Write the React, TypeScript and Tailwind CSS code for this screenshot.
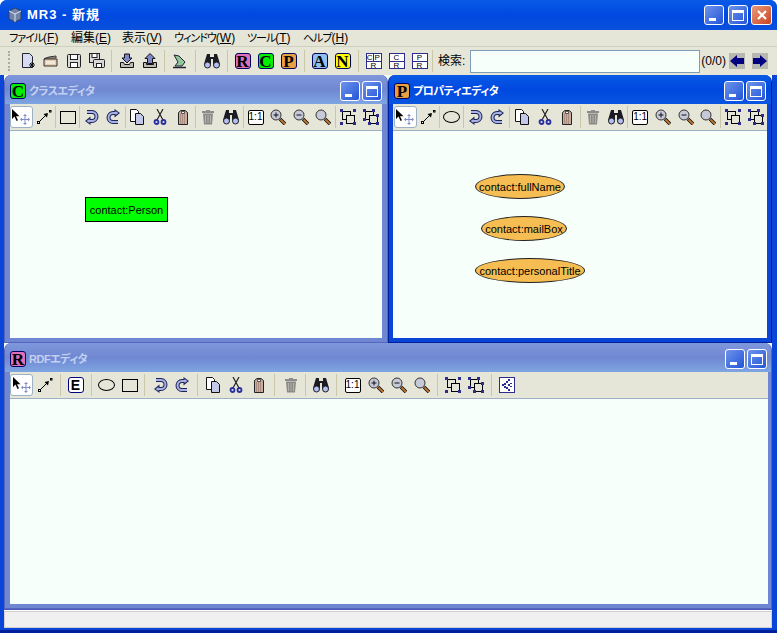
import type { ReactNode } from "react"

const jp = "font-['Liberation_Sans','Noto_Sans_CJK_JP',sans-serif] [font-feature-settings:'palt']"

function Svg({ children, className = "w-4 h-4" }: { children: ReactNode; className?: string }) {
  return (
    <svg viewBox="0 0 16 16" className={className}>
      {children}
    </svg>
  )
}

const SelectIcon = () => (
  <svg viewBox="0 0 20 16" className="h-4 w-5">
    <path d="M1 0v10l2.500-2.500L5.500 12l1.500-.8-2-4h3.500z" fill="#000" />
    <path d="M14 7v7M10.500 10.500h7" stroke="#7f8cc8" strokeWidth="1" />
    <path d="M14 5l-2 2h4zM14 16l-2-2h4zM9 10.500l2-2v4zM19 10.500l-2-2v4z" fill="#7f8cc8" />
  </svg>
)
const ConnectIcon = () => (
  <Svg>
    <path d="M3 13L11 5" stroke="#000" strokeWidth="1" />
    <path d="M12 4l-4.500 1 3.500 3.500z" fill="#000" />
    <rect x="1.500" y="12.500" width="2" height="2" fill="#fff" stroke="#000" />
    <rect x="13.500" y="1.500" width="1.500" height="1.500" fill="#fff" stroke="#000" />
  </Svg>
)
const RectIcon = () => <div className="h-[13px] w-[16px] border border-black" />
const EllipseIcon = () => <div className="h-[12px] w-[17px] rounded-[50%] border border-black" />
const UndoIcon = ({ redo = false }: { redo?: boolean }) => (
  <Svg className={redo ? "h-4 w-4 rotate-180" : "h-4 w-4"}>
    <path d="M4 3h5a4 4 0 0 1 0 9H6" fill="none" stroke="#1c2458" strokeWidth="4" />
    <path d="M7.500 7.500L2 12l5.500 4z" fill="#1c2458" />
    <path d="M4 3h5a4 4 0 0 1 0 9H6" fill="none" stroke="#aab2e2" strokeWidth="2" />
    <path d="M6.500 10L3.500 12l3 2z" fill="#aab2e2" />
  </Svg>
)
const NewIcon = () => (
  <Svg>
    <path d="M2.500.5h7l3 3v11h-10z" fill="#d8dcf2" stroke="#223" />
    <path d="M12 9v6M9 12h6M10 10l4 4M14 10l-4 4" stroke="#111" strokeWidth="1" />
  </Svg>
)
const OpenIcon = () => (
  <Svg>
    <path d="M1 6l5-2 7-1v2H3zM1 6h13v7H1z" fill="#e6cdb4" stroke="#333" />
    <path d="M3 8h9v3H3z" fill="#f3e7d7" />
  </Svg>
)
const SaveIcon = () => (
  <Svg>
    <rect x="1.500" y="1.500" width="13" height="13" rx="1" fill="#d9d9d9" stroke="#222" />
    <rect x="4.500" y="1.500" width="7" height="5" fill="#fff" stroke="#222" />
    <rect x="4.500" y="9.500" width="7" height="5" fill="#fff" stroke="#222" />
  </Svg>
)
const SaveAsIcon = () => (
  <Svg>
    <rect x=".5" y=".5" width="10" height="9" fill="#d9d9d9" stroke="#222" />
    <rect x="3" y=".5" width="5" height="4" fill="#fff" stroke="#222" />
    <rect x="4.500" y="6.500" width="11" height="8" rx="1" fill="#d9d9d9" stroke="#222" />
    <rect x="7.500" y="10.500" width="5" height="4" fill="#fff" stroke="#222" />
  </Svg>
)
const ImportIcon = () => (
  <Svg>
    <path d="M5.500 1h5v4H13l-5 5-5-5h2.500z" fill="#7f88c8" stroke="#111" />
    <path d="M1.500 9.500h3l1 2h5l1-2h3v5h-13z" fill="#bcbcb4" stroke="#111" />
  </Svg>
)
const ExportIcon = () => (
  <Svg>
    <path d="M8 .5l5 5h-2.500v5h-5v-5H3z" fill="#7f88c8" stroke="#111" />
    <path d="M1.500 9.500h3v2h7v-2h3v5h-13z" fill="#bcbcb4" stroke="#111" />
  </Svg>
)
const AttrIcon = () => (
  <Svg>
    <path d="M3 2l5 1 6 6-3 4H4l3-4z" fill="#8fc79d" stroke="#223" />
    <path d="M2 14.500h13" stroke="#223" strokeWidth="1.400" />
  </Svg>
)
const BinocularsIcon = () => (
  <Svg>
    <path d="M3 1h3v3h4V1h3l3 10H9V6H7v5H0z" fill="#1b1b22" />
    <circle cx="3.500" cy="12" r="3" fill="#b6c0f0" stroke="#1b1b22" />
    <circle cx="12.500" cy="12" r="3" fill="#b6c0f0" stroke="#1b1b22" />
  </Svg>
)
const CopyIcon = () => (
  <Svg>
    <path d="M1.500 .5h6l2 2v10h-8z" fill="#fff" stroke="#111" />
    <path d="M6.500 4.500h5l3 3v8h-8z" fill="#c3c7e8" stroke="#111" />
  </Svg>
)
const CutIcon = () => (
  <Svg>
    <path d="M5 0l6 11M11 0L5 11" stroke="#222" strokeWidth="1.200" />
    <circle cx="4.500" cy="13" r="2" fill="#d8dcf4" stroke="#28309a" strokeWidth="1.800" />
    <circle cx="11.500" cy="13" r="2" fill="#d8dcf4" stroke="#28309a" strokeWidth="1.800" />
  </Svg>
)
const PasteIcon = () => (
  <Svg>
    <path d="M3.500 3.500L6 1.500h4l2.500 2v12h-9z" fill="#c9aea2" stroke="#222" />
    <path d="M6.500 2.500h3v2h-3z" fill="#f6f6f0" stroke="#222" strokeWidth=".7" />
    <path d="M5 6h6M5 8h6M5 10h6M5 12h6M5 14h6" stroke="#8d6b60" strokeDasharray="1 1" />
  </Svg>
)
const TrashIcon = () => (
  <Svg>
    <path d="M2 2h12v2H2zM6 1h4v1H6z" fill="#8c8c8c" />
    <path d="M3 4.500h10l-1 11H4z" fill="#8a8a86" />
    <path d="M5.500 6v8M8 6v8M10.500 6v8" stroke="#b3b3ac" />
  </Svg>
)
const OneIcon = () => (
  <div className="flex h-[15px] w-[16px] items-center justify-center rounded-[2px] border border-black bg-white text-[10px] leading-none text-black">
    1:1
  </div>
)
const ZoomIcon = ({ mark = "" }: { mark?: "" | "+" | "-" }) => (
  <Svg>
    <path d="M10 10l5 5" stroke="#111" strokeWidth="3.500" />
    <path d="M10.500 10.500l4.500 4.500" stroke="#c07830" strokeWidth="1.800" />
    <circle cx="6" cy="6" r="5" fill="#c6c9d8" stroke="#333" />
    {mark && <path d="M3.500 6h5" stroke="#111" />}
    {mark === "+" && <path d="M6 3.500v5" stroke="#111" />}
  </Svg>
)
const Handles = ({ pts }: { pts: number[][] }) => (
  <>
    {pts.map(([x, y]) => (
      <rect key={`${x}-${y}`} x={x} y={y} width="3" height="3" fill="#2c2c8c" />
    ))}
  </>
)
const GroupIcon = () => (
  <Svg>
    <rect x="2.500" y="2.500" width="8" height="8" fill="none" stroke="#000" />
    <rect x="6.500" y="6.500" width="8" height="8" fill="#e6e6d8" stroke="#000" />
    <Handles pts={[[0, 0], [13, 0], [0, 13], [13, 13]]} />
  </Svg>
)
const UngroupIcon = () => (
  <Svg>
    <rect x="2.500" y="2.500" width="8" height="8" fill="none" stroke="#000" />
    <rect x="6.500" y="6.500" width="8" height="8" fill="#e6e6d8" stroke="#000" />
    <Handles pts={[[0, 0], [9, 0], [0, 9], [13, 5], [5, 13], [13, 13]]} />
  </Svg>
)
const TreeIcon = () => (
  <div className="flex h-[16px] w-[16px] items-center justify-center border border-[#2c2c8c] bg-white">
    <svg viewBox="0 0 14 14" className="h-[14px] w-[14px]">
      <path d="M8 1h2v2H8zM6 3h2v2H6zM4 5h2v2H4zM2 6h2v2H2zM4 8h2v2H4zM6 9h2v2H6zM8 11h2v2H8zM10 5h2v1h-2zM10 8h2v1h-2zM8 6h2v2H8z" fill="#2c2c8c" />
    </svg>
  </div>
)
const EIcon = () => (
  <div className="flex h-[16px] w-[16px] items-center justify-center rounded-[3px] border border-[#000080] bg-white font-['Liberation_Sans',sans-serif] text-[14px] leading-none font-bold text-black">
    E
  </div>
)

function LetterIcon({ letter, color }: { letter: string; color: string }) {
  return (
    <div className={`flex h-[16px] w-[16px] shrink-0 items-center justify-center rounded-[3px] border border-[#000060] font-['Liberation_Serif',serif] text-[17px] leading-none font-bold text-black ${color}`}>
      {letter}
    </div>
  )
}

function LayerIcon({ top, bottom }: { top: string[]; bottom: string }) {
  return (
    <div className="flex h-[16px] w-[16px] flex-col border border-[#2c2c8c] bg-white font-['Liberation_Sans',sans-serif] text-[8px] leading-[7px] text-black">
      <div className="flex flex-1 justify-center border-b border-[#2c2c8c]">
        {top.map((t, i) => (
          <span key={t} className={i > 0 ? "flex-1 border-l border-[#2c2c8c] text-center" : "flex-1 text-center"}>
            {t}
          </span>
        ))}
      </div>
      <div className="flex-1 text-center">{bottom}</div>
    </div>
  )
}

const Btn = ({ children, active = false }: { children: ReactNode; active?: boolean }) => (
  <div className={active ? "flex h-[22px] w-[23px] items-center justify-center rounded-[3px] border border-[#9db0c4] bg-white" : "flex h-[22px] w-[23px] items-center justify-center"}>
    {children}
  </div>
)

const Sep = ({ w = "w-px" }: { w?: string }) => (
  <div className={`flex h-[22px] justify-center ${w}`}>
    <div className="h-full w-px shrink-0 bg-[#c9c7a8]" />
  </div>
)

const BigBtn = ({ children }: { children: ReactNode }) => (
  <div className="flex h-[22px] w-[23px] items-center justify-center">{children}</div>
)

function Toolbar({ shape, inset = "" }: { shape: ReactNode; inset?: string }) {
  return (
    <div className={`flex h-[26px] shrink-0 items-center bg-[#e6e6d8] ${inset}`}>
      <Btn active><SelectIcon /></Btn>
      <Btn><ConnectIcon /></Btn>
      <Sep />
      <Btn>{shape}</Btn>
      <Sep />
      <Btn><UndoIcon /></Btn>
      <Btn><UndoIcon redo /></Btn>
      <Sep />
      <Btn><CopyIcon /></Btn>
      <Btn><CutIcon /></Btn>
      <Btn><PasteIcon /></Btn>
      <Sep w="w-[3px]" />
      <Btn><TrashIcon /></Btn>
      <Btn><BinocularsIcon /></Btn>
      <Sep w="w-[2px]" />
      <Btn><OneIcon /></Btn>
      <Btn><ZoomIcon mark="+" /></Btn>
      <Btn><ZoomIcon mark="-" /></Btn>
      <Btn><ZoomIcon /></Btn>
      <Sep w="w-[2px]" />
      <Btn><GroupIcon /></Btn>
      <Btn><UngroupIcon /></Btn>
    </div>
  )
}

function RdfToolbar() {
  const s = "w-[8px]"
  return (
    <div className="flex h-[26px] shrink-0 items-center bg-[#e6e6d8]">
      <Btn active><SelectIcon /></Btn>
      <Btn><ConnectIcon /></Btn>
      <Sep w={s} />
      <Btn><EIcon /></Btn>
      <Sep w={s} />
      <Btn><EllipseIcon /></Btn>
      <Btn><RectIcon /></Btn>
      <Sep w="w-[7px]" />
      <Btn><UndoIcon /></Btn>
      <Btn><UndoIcon redo /></Btn>
      <Sep w="w-[7px]" />
      <Btn><CopyIcon /></Btn>
      <Btn><CutIcon /></Btn>
      <Btn><PasteIcon /></Btn>
      <Sep w="w-[9px]" />
      <Btn><TrashIcon /></Btn>
      <Sep w="w-[7px]" />
      <Btn><BinocularsIcon /></Btn>
      <Sep w="w-[9px]" />
      <Btn><OneIcon /></Btn>
      <Btn><ZoomIcon mark="+" /></Btn>
      <Btn><ZoomIcon mark="-" /></Btn>
      <Btn><ZoomIcon /></Btn>
      <Sep w={s} />
      <Btn><GroupIcon /></Btn>
      <Btn><UngroupIcon /></Btn>
      <Sep w={s} />
      <Btn><TreeIcon /></Btn>
    </div>
  )
}

const CapBtn = ({ kind }: { kind: "min" | "max" | "close" }) => (
  <div className={kind === "close"
    ? "flex h-[20px] w-[21px] items-center justify-center rounded-[3px] border border-white bg-gradient-to-br from-[#e89a7a] to-[#c8401c]"
    : "flex h-[20px] w-[20px] items-center justify-center rounded-[3px] border border-white bg-gradient-to-br from-[#6f93ea] to-[#2353d8]"}>
    {kind === "min" && <div className="mt-[9px] mr-[3px] h-[3px] w-[7px] bg-white" />}
    {kind === "max" && <div className="h-[11px] w-[12px] border border-t-[3px] border-white" />}
    {kind === "close" && (
      <svg viewBox="0 0 12 12" className="h-3 w-3">
        <path d="M2 2l8 8M10 2l-8 8" stroke="#fff" strokeWidth="2.200" />
      </svg>
    )}
  </div>
)

function Frame({ title, icon, active = false, toolbar, children, className, titlePad, bodyPad }: {
  title: string
  icon: ReactNode
  active?: boolean
  toolbar: ReactNode
  children?: ReactNode
  className: string
  titlePad: string
  bodyPad: string
}) {
  return (
    <div className={`${className} flex flex-col rounded-t-[7px] border-x border-b ${active ? "border-[#00209a] bg-[#0a45d8]" : "border-[#5566bc] bg-[#6f86d2]"}`}>
      <div className={active
        ? `flex h-[29px] shrink-0 items-center gap-[3px] rounded-t-[7px] bg-gradient-to-b from-[#0a5ae6] via-[#0048e0] to-[#0a55e0] pt-[3px] ${titlePad}`
        : `flex h-[29px] shrink-0 items-center gap-[3px] rounded-t-[7px] bg-gradient-to-b from-[#7f97dc] via-[#6f88d2] to-[#7fa5e2] pt-[3px] ${titlePad}`}>
        {icon}
        <span className={`${jp} flex-1 text-[11px] font-bold tracking-[-0.5px] ${active ? "text-white" : "text-[#c3d1f1]"}`}>{title}</span>
        <div className="flex gap-[2px]">
          <CapBtn kind="min" />
          <CapBtn kind="max" />
        </div>
      </div>
      <div className={`flex min-h-0 flex-1 flex-col pb-[4px] ${bodyPad}`}>
        {toolbar}
        <div className="relative min-h-0 flex-1 border-t border-[#9db0c4] bg-[#f6fffa]">{children}</div>
      </div>
    </div>
  )
}

const Oval = ({ text, pos }: { text: string; pos: string }) => (
  <div className={`absolute flex h-[25px] items-center justify-center rounded-[50%] border border-[#222] bg-[#f6bd52] pt-px font-['Liberation_Sans',sans-serif] text-[11px] text-black ${pos}`}>
    {text}
  </div>
)

const menus = [
  { name: "ファイル", key: "F", w: "w-[62px]", kana: true },
  { name: "編集", key: "E", w: "w-[51px]", kana: false },
  { name: "表示", key: "V", w: "w-[52px]", kana: false },
  { name: "ウィンドウ", key: "W", w: "w-[73px]", kana: true },
  { name: "ツール", key: "T", w: "w-[56px]", kana: true },
  { name: "ヘルプ", key: "H", w: "w-[44px]", kana: true },
]

export default function App() {
  return (
    <div className={`${jp} flex h-[633px] w-[777px] flex-col overflow-hidden rounded-t-[7px] bg-[#0a45d8] text-black`}>
      <div className="flex h-[30px] shrink-0 items-center bg-gradient-to-b from-[#0a5ae6] via-[#0048e0] to-[#0a50dc] pr-[5px] pl-[7px]">
        <svg viewBox="0 0 16 16" className="h-4 w-4">
          <path d="M2 4l6-3 6 3v8l-6 3-6-3z" fill="#6f83a8" stroke="#33405f" />
          <path d="M2 4l6 3 6-3M8 7v8" stroke="#d9e2f2" fill="none" />
        </svg>
        <span className="ml-[4px] flex-1 text-[13px] font-bold tracking-[1px] text-white">MR3 - 新規</span>
        <div className="flex items-center">
          <CapBtn kind="min" />
          <div className="w-[4px]" />
          <CapBtn kind="max" />
          <div className="w-[3px]" />
          <CapBtn kind="close" />
        </div>
      </div>

      <div className="flex h-[16px] shrink-0 items-center bg-[#e6e6d8] pl-[9px] text-[12px] leading-none">
        {menus.map((m) => (
          <span key={m.key} className={`${m.w} whitespace-nowrap`}>
            <span className={m.kana ? "text-[11px] tracking-[-1px]" : ""}>{m.name}</span>
            (<span className="underline">{m.key}</span>)
          </span>
        ))}
      </div>

      <div className="flex h-[29px] shrink-0 items-center border-t border-[#cfcfbd] bg-[#e6e6d8] pl-[8px]">
        <div className="mr-[6px] h-[20px] w-[2px] border-l-2 border-dotted border-[#aaa]" />
        <BigBtn><NewIcon /></BigBtn>
        <BigBtn><OpenIcon /></BigBtn>
        <BigBtn><SaveIcon /></BigBtn>
        <BigBtn><SaveAsIcon /></BigBtn>
        <Sep w="w-[7px]" />
        <BigBtn><ImportIcon /></BigBtn>
        <BigBtn><ExportIcon /></BigBtn>
        <Sep w="w-[6px]" />
        <BigBtn><AttrIcon /></BigBtn>
        <Sep w="w-[10px]" />
        <BigBtn><BinocularsIcon /></BigBtn>
        <Sep w="w-[8px]" />
        <BigBtn><LetterIcon letter="R" color="bg-[#e070b8]" /></BigBtn>
        <BigBtn><LetterIcon letter="C" color="bg-[#00f000]" /></BigBtn>
        <BigBtn><LetterIcon letter="P" color="bg-[#e8a040]" /></BigBtn>
        <Sep w="w-[8px]" />
        <BigBtn><LetterIcon letter="A" color="bg-[#90c0f0]" /></BigBtn>
        <BigBtn><LetterIcon letter="N" color="bg-[#ffff00]" /></BigBtn>
        <Sep w="w-[8px]" />
        <BigBtn><LayerIcon top={["C", "P"]} bottom="R" /></BigBtn>
        <BigBtn><LayerIcon top={["C"]} bottom="R" /></BigBtn>
        <BigBtn><LayerIcon top={["P"]} bottom="R" /></BigBtn>
        <Sep w="w-[3px]" />
        <span className="ml-[4px] text-[12px]">検索:</span>
        <div className="ml-[5px] h-[23px] w-[230px] border border-[#7f9db9] bg-[#f6fffa]" />
        <span className="ml-px w-[26px] font-['Liberation_Sans',sans-serif] text-[12px] leading-none">(0/0)</span>
        <div className="ml-[2px] flex gap-[7px]">
          <svg viewBox="0 0 16 16" className="h-4 w-4 bg-[#b8b8b0]">
            <path d="M1 8l7-6v3h7v6H8v3z" fill="#000080" />
          </svg>
          <svg viewBox="0 0 16 16" className="h-4 w-4 bg-[#b8b8b0]">
            <path d="M15 8L8 2v3H1v6h7v3z" fill="#000080" />
          </svg>
        </div>
      </div>

      <div className="mr-[5px] ml-[4px] flex min-h-0 flex-1 flex-col bg-[#f6fffa]">
        <div className="flex h-[268px] shrink-0">
          <Frame
            className="w-[384px]"
            title="クラスエディタ"
            icon={<LetterIcon letter="C" color="bg-[#00f000]" />}
            titlePad="px-[5px]"
            bodyPad="px-[5px]"
            toolbar={<Toolbar shape={<RectIcon />} />}
          >
            <div className="absolute top-[66px] left-[75px] flex h-[25px] w-[83px] items-center justify-center border border-black bg-[#00ff00] pt-px font-['Liberation_Sans',sans-serif] text-[11px]">
              contact:Person
            </div>
          </Frame>
          <Frame
            active
            className="w-[384px]"
            title="プロパティエディタ"
            icon={<LetterIcon letter="P" color="bg-[#e8a040]" />}
            titlePad="px-[5px]"
            bodyPad="px-[4px]"
            toolbar={<Toolbar shape={<EllipseIcon />} inset="pl-px" />}
          >
            <Oval text="contact:fullName" pos="top-[43px] left-[82px] w-[90px]" />
            <Oval text="contact:mailBox" pos="top-[85px] left-[88px] w-[86px]" />
            <Oval text="contact:personalTitle" pos="top-[127px] left-[82px] w-[110px]" />
          </Frame>
        </div>
        <Frame
          className="h-[266px] shrink-0"
          title="RDFエディタ"
          icon={<LetterIcon letter="R" color="bg-[#e070b8]" />}
          titlePad="pr-[4px] pl-[5px]"
          bodyPad="pr-[3px] pl-[5px]"
          toolbar={<RdfToolbar />}
        />
      </div>

      <div className="mr-[5px] ml-[4px] h-[19px] shrink-0 border-t border-[#4a5ab8] bg-white pt-px">
        <div className="h-full border border-[#d0d0d0] bg-[#f0f0f0]" />
      </div>
      <div className="h-[2px] shrink-0" />
      <div className="h-[3px] shrink-0 bg-[#001f9a]" />
    </div>
  )
}
